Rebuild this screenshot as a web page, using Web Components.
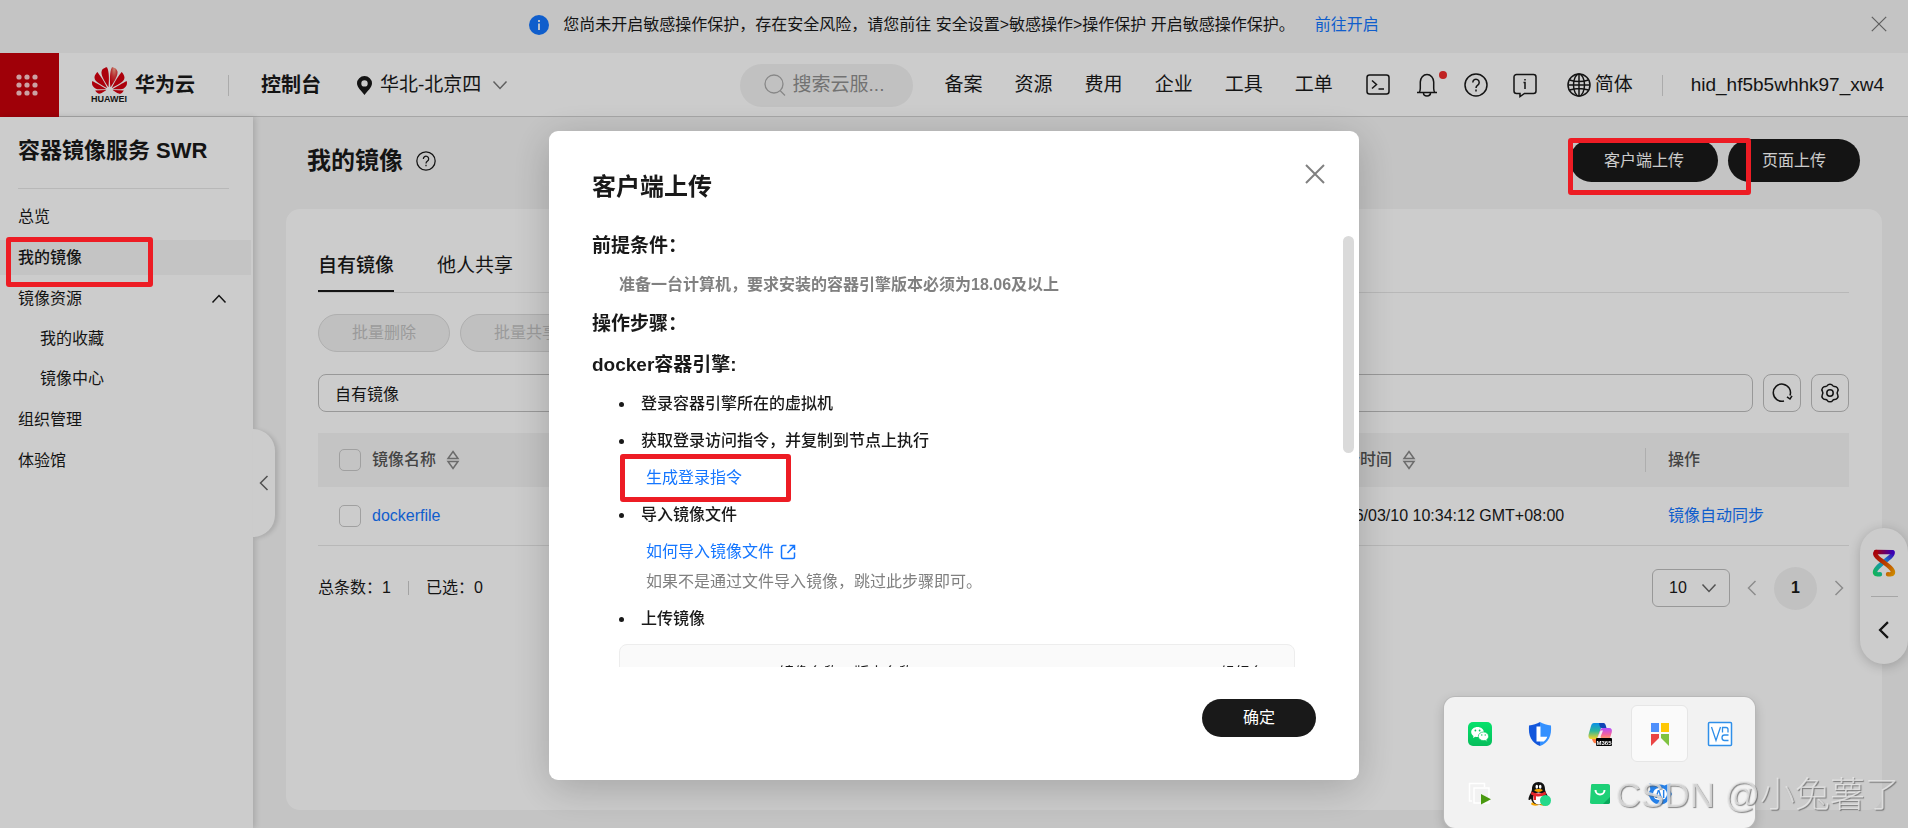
<!DOCTYPE html>
<html lang="zh-CN">
<head>
<meta charset="utf-8">
<meta name="viewport" content="width=device-width, initial-scale=1">
<title>容器镜像服务 SWR</title>
<style>
    html, body {
        margin: 0;
        height: 100%;
    }
    body {
        display: flex;
        flex-direction: column;
        overflow: hidden;
        font-family: "Liberation Sans", "Noto Sans CJK SC", sans-serif;
        font-size: 16px;
        line-height: 24px;
        color: #191919;
        background: #f5f5f5;
        --link: #1476ff;
        --line: #e6e6e6;
        --border: #bfbfbf;
        --muted: #808080;
        --dark: #191919;
    }
    .layout {
        flex: 1;
        min-height: 0;
        display: flex;
    }
    image-page {
        flex: 1;
    }
    .mark-nav {
        left: 6px;
        top: 237px;
        width: 147px;
        height: 50px;
    }
    .mark-upload {
        right: 157px;
        top: 138px;
        width: 183px;
        height: 57px;
    }
</style>
</head>
<body>
    <notice-bar></notice-bar>
    <app-header user="hid_hf5b5whhk97_xw4"></app-header>
    <div class="layout">
        <side-nav></side-nav>
        <image-page></image-page>
    </div>
    <float-helper></float-helper>
    <upload-dialog heading="客户端上传"></upload-dialog>
    <mark-box class="mark-nav"></mark-box>
    <mark-box class="mark-upload"></mark-box>
    <tray-panel></tray-panel>
    <water-mark>CSDN @小兔薯了</water-mark>

<script>
const RESET = `
    * {
        margin: 0;
        padding: 0;
        box-sizing: border-box;
    }
    button, input, select {
        font: inherit;
        color: inherit;
        border: 0;
        background: none;
        outline: 0;
    }
    button {
        cursor: pointer;
    }
    a {
        color: var(--link);
        text-decoration: none;
    }
    ul {
        list-style: none;
    }
`;

// viewBox and body of every icon, keyed by name
const ICONS = {
    close: ["0 0 20 20", `<path d="M1 1l18 18M19 1L1 19"/>`],
    apps: ["0 0 22 22", `<g fill="currentColor" stroke="none"><circle cx="3" cy="3" r="2.6"/><circle cx="11" cy="3" r="2.6"/><circle cx="19" cy="3" r="2.6"/><circle cx="3" cy="11" r="2.6"/><circle cx="11" cy="11" r="2.6"/><circle cx="19" cy="11" r="2.6"/><circle cx="3" cy="19" r="2.6"/><circle cx="11" cy="19" r="2.6"/><circle cx="19" cy="19" r="2.6"/></g>`],
    pin: ["0 0 15 19", `<path fill="currentColor" stroke="none" fill-rule="evenodd" d="M7.500 0A7.500 7.300 0 0 0 0 7.300C0 11.500 4.500 15 7.500 19 10.500 15 15 11.500 15 7.300A7.500 7.300 0 0 0 7.500 0zM7.500 4.200a3.200 3.200 0 1 1 0 6.400 3.200 3.200 0 0 1 0-6.400z"/>`],
    down: ["0 0 16 16", `<path d="M1.500 4.500L8 11.500l6.500-7"/>`],
    up: ["0 0 16 16", `<path d="M1.500 11.500L8 4.500l6.500 7"/>`],
    left: ["0 0 16 16", `<path d="M11.500 1L4.500 8l7 7"/>`],
    right: ["0 0 16 16", `<path d="M4.500 1l7 7-7 7"/>`],
    search: ["0 0 22 22", `<circle cx="10" cy="10" r="9"/><path d="M16 16.500l5 5"/>`],
    terminal: ["0 0 24 24", `<rect x="1" y="2" width="22" height="19" rx="2.500"/><path d="M6 7.500l4.500 4-4.500 4M12.500 16H18"/>`],
    bell: ["0 0 24 24", `<path d="M2 19.500h20M4 19.500c1-1 1.300-2 1.300-4V9a6.700 7.500 0 0 1 13.400 0v6.500c0 2 .3 3 1.300 4M8.500 20a3.500 3 0 0 0 7 0"/>`],
    help: ["0 0 24 24", `<circle cx="12" cy="12" r="11"/><path d="M8.800 9.500a3.200 3.200 0 1 1 5 2.600c-1.300.9-1.800 1.300-1.800 2.900M12 16.600v1.800"/>`],
    message: ["0 0 24 24", `<path d="M3.500 1.500h17a2.500 2.500 0 0 1 2.500 2.500v14a2.500 2.500 0 0 1-2.500 2.500H11.500L7 23.500v-3H3.500A2.500 2.500 0 0 1 1 18V4a2.500 2.500 0 0 1 2.500-2.500zM10.500 9.500H12V16M12 6v1.600"/>`],
    globe: ["0 0 24 24", `<circle cx="12" cy="12" r="11"/><ellipse cx="12" cy="12" rx="5.500" ry="11"/><path d="M12 1v22M2.500 7c5.500 1.800 13.500 1.800 19 0M2.500 17c5.500-1.800 13.500-1.800 19 0M1 12h22"/>`],
    refresh: ["0 0 20 20", `<path d="M12 18a8.600 8.600 0 1 1 6-5.500M15 13.800l3 2.200 2-3.200"/>`],
    gear: ["0 0 20 20", `<circle cx="10" cy="10" r="3.200"/><path d="M7.200 2.700a3.300 3.300 0 0 1 5.600 0 3.300 3.300 0 0 0 1.500.8 3.300 3.300 0 0 1 3.400 4.700 3.300 3.300 0 0 0 0 3.600 3.300 3.300 0 0 1-3.400 4.700 3.300 3.300 0 0 0-1.500.8 3.300 3.300 0 0 1-5.600 0 3.300 3.300 0 0 0-1.500-.8 3.300 3.300 0 0 1-3.400-4.700 3.300 3.300 0 0 0 0-3.600 3.300 3.300 0 0 1 3.400-4.700 3.300 3.300 0 0 0 1.500-.8z"/>`],
    sort: ["0 0 12 20", `<path d="M6 1.500L11 8.500H1zM6 18.500L11 11.500H1z"/>`],
    external: ["0 0 16 16", `<path d="M6.500 1.500H3A1.500 1.500 0 0 0 1.500 3v10A1.500 1.500 0 0 0 3 14.500h10a1.500 1.500 0 0 0 1.500-1.500V8.500M9.500 1.500h5V6M14.500 1.500L7.500 9"/>`],
    info: ["0 0 20 20", `<circle cx="10" cy="10" r="10" fill="#1476ff" stroke="none"/><path stroke="#fff" stroke-width="1.800" d="M10 8.500V15M10 5v2"/>`],
    huawei: ["0 2.900 24 18.200", `<defs><radialGradient id="p" cx=".55" cy=".1" r=".8"><stop offset="0" stop-color="#fba58c"/><stop offset=".5" stop-color="#e5393c"/><stop offset="1" stop-color="#d7000f"/></radialGradient></defs><g fill="#d7000f" stroke="none"><path d="M3.670 6.140S1.820 7.910 1.720 9.780v.35c.08 1.510 1.220 2.400 1.220 2.400 1.830 1.790 6.260 4.040 7.300 4.550 0 0 .06.03.1-.01l.02-.04v-.04C7.520 10.800 3.670 6.140 3.670 6.140zM9.650 18.600c-.02-.08-.1-.08-.1-.08l-7.380.26c.8 1.430 2.150 2.530 3.560 2.200.96-.25 3.160-1.780 3.880-2.300.06-.05.04-.09.04-.09zm.08-.78C6.490 15.630.21 12.280.21 12.280c-.15.46-.2.9-.21 1.300v.07c0 1.070.4 1.820.4 1.820.8 1.690 2.340 2.200 2.340 2.200.7.3 1.400.31 1.400.31.12.02 4.400 0 5.540 0 .05 0 .08-.05.08-.05v-.06c0-.03-.03-.05-.03-.05zM9.060 3.190a3.420 3.420 0 0 0-2.570 3.150v.41c.03.6.16 1.050.16 1.050.66 2.900 3.860 7.650 4.550 8.650.05.05.1.03.1.03a.1.1 0 0 0 .06-.1c1.060-10.600-1.110-13.420-1.110-13.420-.32.02-1.190.23-1.190.23z"/><path fill="url(#p)" d="M17.359 5.460s-.49-1.800-2.440-2.280c0 0-.57-.14-1.170-.22 0 0-2.180 2.810-1.120 13.430.01.07.06.08.06.08.07.03.1-.03.1-.03.72-1.030 3.900-5.760 4.550-8.640 0 0 .36-1.400.02-2.340z"/><path d="M14.439 18.530s-.07 0-.09.05c0 0-.01.07.03.1.7.51 2.850 2 3.880 2.300 0 0 .16.05.43.06h.14c.69-.02 1.900-.37 3-2.260zM22.269 10.120c.14-2.060-1.940-3.970-1.940-3.980 0 0-3.850 4.660-6.670 10.800 0 0-.03.08.02.13l.04.01h.06c1.060-.53 5.460-2.770 7.280-4.540 0 0 1.150-.93 1.210-2.420zM23.789 12.260s-6.280 3.370-9.520 5.550c0 0-.05.04-.03.11 0 0 .03.06.07.06 1.160 0 5.560 0 5.670-.02 0 0 .57-.02 1.270-.29 0 0 1.560-.5 2.370-2.270 0 0 .73-1.450.17-3.140z"/></g>`],
    ribbon: ["0 0 24 28", `<defs><linearGradient id="a" x1="0" y1="0" x2="1" y2="1"><stop offset="0" stop-color="#d0000f"/><stop offset=".5" stop-color="#e84a00"/><stop offset="1" stop-color="#ffa800"/></linearGradient><linearGradient id="b" x1="1" y1="0" x2="0" y2="1"><stop offset="0" stop-color="#4a00e0"/><stop offset=".45" stop-color="#1db4ff"/><stop offset="1" stop-color="#17e070"/></linearGradient><linearGradient id="c" x1="0" y1="0" x2="1" y2="0"><stop offset="0" stop-color="#d0000f"/><stop offset="1" stop-color="#4a00e0"/></linearGradient></defs><g stroke-width="4.400" stroke-linecap="round" stroke-linejoin="round"><path stroke="url(#b)" d="M20.500 3.500C22 8 2.500 17 3 23.500 3.200 25.500 6 25.500 8 25.300"/><path stroke="url(#c)" d="M4 3L20.500 3.100"/><path stroke="url(#a)" d="M4 3C-1 8 21.500 17 21 23.500c-.2 2-3 2-5 1.800"/></g>`],
    wechat: ["0 0 24 24", `<defs><linearGradient id="g" x1="0" y1="0" x2="0" y2="1"><stop offset="0" stop-color="#06e26c"/><stop offset="1" stop-color="#06bd5b"/></linearGradient></defs><g stroke="none"><rect width="24" height="24" rx="5" fill="url(#g)"/><path fill="#fff" d="M9.500 5C6 5 3.200 7.200 3.200 10c0 1.600.9 3 2.300 3.900L5 16l2.400-1.200c.7.2 1.400.3 2.100.3C13 15.100 15.800 12.800 15.800 10S13 5 9.500 5z"/><path fill="#fff" stroke="#09cc62" stroke-width=".7" d="M15.500 10c-2.900 0-5.200 1.900-5.200 4.300s2.300 4.300 5.200 4.300c.6 0 1.200-.1 1.700-.2l2 1-.5-1.800c1.200-.8 1.900-1.900 1.900-3.300 0-2.400-2.200-4.300-5.100-4.300z"/><g fill="#08c860"><circle cx="7.400" cy="8.500" r=".9"/><circle cx="11.600" cy="8.500" r=".9"/><circle cx="13.800" cy="13" r=".7"/><circle cx="17.200" cy="13" r=".7"/></g></g>`],
    shield: ["0 0 24 24", `<g stroke="none"><path fill="#1357dc" d="M12 0C9 2 5 3 1 3.500c-.3 5 0 9 2 13C5 20 8 22.500 12 24z"/><path fill="#3491ff" d="M12 0c3 2 7 3 11 3.500.3 5 0 9-2 13-2 3.500-5 6-9 7.500z"/><path fill="#fff" d="M8.500 4.500h4v10.300h6.800c-.8 2-2 3.500-3.500 4.700H8.500z"/></g>`],
    copilot: ["0 0 24 24", `<defs><linearGradient id="l" x1="0" y1="0" x2="0" y2="1"><stop offset="0" stop-color="#0a8fe8"/><stop offset=".5" stop-color="#2cb69b"/><stop offset="1" stop-color="#f9d423"/></linearGradient><linearGradient id="r" x1="0" y1="0" x2="0" y2="1"><stop offset="0" stop-color="#b44cff"/><stop offset=".6" stop-color="#f4649a"/><stop offset="1" stop-color="#ffa060"/></linearGradient></defs><g stroke="none"><path fill="url(#l)" d="M6 1h9L9 17H3c-2 0-3-2-2.400-4.500L3 4c.5-2 1.500-3 3-3z"/><path fill="#1145b5" d="M11 1h4c2 0 2.500 1 3.500 5H14c-1.500 0-2.500-1-3-5z"/><path fill="url(#r)" d="M15 6h6c2.500 0 3.500 2 2.700 4.500L22 16H13l-1-2-2 3H9l3-8.500C12.500 7 13.500 6 15 6z"/><path fill="#f2f2f2" d="M12.500 8.500L9 17l3-1 3-7.500z"/><path fill="#ff7a45" d="M4 17h5l-1 4c-2 1-3-1-4-4z"/><rect x="8" y="16" width="16" height="8" rx="1" fill="#000"/></g><text x="16" y="22.500" text-anchor="middle" font-size="6" font-weight="700" fill="#fff" stroke="none">M365</text>`],
    blocks: ["0 0 24 24", `<g stroke="none"><path fill="#4f8ffb" d="M3 1h8v9H3z"/><path fill="#fec706" d="M13 1h8v9h-8z"/><path fill="#ea4444" d="M3 12h8v4l-8 8z"/><path fill="#7fc241" d="M13 12h8v12l-8-8z"/></g>`],
    vnc: ["0 0 24 24", `<g fill="none" stroke="#2f8fe9"><rect x=".5" y=".5" width="23" height="23" rx="1" fill="#fff"/><path stroke-width="1.300" d="M3.500 5L8 18.500 12.500 5M14.500 10.500V5.500h3.500c1.500 0 2 .5 2 2v3M20.500 13h-4c-1.500 0-2.500 1-2.500 2.800s1 2.700 2.500 2.700h4"/></g>`],
    frames: ["0 0 24 24", `<path fill="none" stroke="#fff" stroke-width="1.500" d="M4 19H1.500V1.500h15V5M6 6h15v15H6z"/><path fill="#4a9a10" stroke="none" d="M13 12l10 5.200-10 5.200z"/>`],
    penguin: ["0 0 24 24", `<g stroke="none"><path fill="#f7a600" d="M3 22c1-3 7-2 8 0s-7 2.500-8 0zM11 22c1-3 7-2 8 0s-7 2.500-8 0z"/><path fill="#111" d="M10.500 0C6 0 4 3 4 7c0 3-3 6-3.500 10 0 2 1.500 1 2.500-.5.5 3 3 6 7.500 6s7-3 7.500-6c1 1.500 2.500 2 2.500.5C20 13 17 10 17 7c0-4-2-7-6.500-7z"/><ellipse cx="10.500" cy="16.500" rx="5.500" ry="6" fill="#fff"/><path fill="#e5252b" d="M3.500 9.500c4 2.500 10 2.500 14 0l.5 3c-3 1.800-7 2.200-10 1.700V18H5.500v-4.500L3 12.500z"/><path fill="#f7a600" d="M6 8c2-1.500 7-1.500 9 0-2 2.500-7 2.500-9 0z"/><ellipse cx="8.800" cy="4.800" rx="1.300" ry="2" fill="#fff"/><ellipse cx="12.200" cy="4.800" rx="1.300" ry="2" fill="#fff"/><circle cx="9" cy="5" r=".6"/><circle cx="12" cy="5" r=".6"/><circle cx="17.500" cy="18.500" r="5.500" fill="#24d98a"/></g>`],
    bag: ["0 0 24 24", `<g stroke="none"><path fill="#1dd077" d="M4 2h16c1.200 0 2 .8 2 2v16c0 1.200-.8 2-2 2H4c-1.500 0-2.200-.8-2-2L3 4c0-1.200.3-2 1-2z"/><path fill="#0aa85c" d="M22 15v5c0 1.200-.8 2-2 2h-5z"/></g><path stroke="#fff" stroke-width="2" d="M7.500 8c0 6 9 6 9 0"/>`],
    bot: ["0 0 24 24", `<g stroke="none"><path fill="#2580e8" d="M1.500 1l6 2.500c3-1.300 6-1.300 9 0l6-2.500-.8 6.500L24 12l-3 6c-5 6-13 6-18 0L0 12l2.300-4.500z"/><rect x="5" y="6" width="14" height="12" rx="6" fill="#fff"/></g><text x="12" y="16" text-anchor="middle" font-size="10" font-weight="700" fill="#2580e8" stroke="none">AI</text>`]
};

class UiElement extends HTMLElement {
    connectedCallback() {
        if (!this.shadowRoot) {
            this.attachShadow({ mode: "open" });
        }
        this.shadowRoot.innerHTML = `<style>${RESET}${this.styles()}</style>${this.render()}`;
    }

    styles() {
        return "";
    }
}

class UiIcon extends UiElement {
    styles() {
        return `
            :host {
                display: block;
                flex: none;
                width: 16px;
                height: 16px;
            }
            svg {
                display: block;
                width: 100%;
                height: 100%;
                overflow: visible;
                stroke: currentColor;
                stroke-width: var(--stroke, 1.5);
                fill: none;
            }
        `;
    }

    render() {
        const [box, body] = ICONS[this.getAttribute("name")];
        return `<svg viewBox="${box}" aria-hidden="true">${body}</svg>`;
    }
}

class PillButton extends UiElement {
    styles() {
        return `
            :host {
                display: block;
                --pad: 34px;
                --height: 43px;
            }
            button {
                display: block;
                height: var(--height);
                padding: 0 var(--pad);
                border-radius: 22px;
                color: #fff;
                background: var(--dark);
                white-space: nowrap;
            }
            button:disabled {
                color: #c2c2c2;
                background: #f0f0f0;
                border: 1px solid #dbdbdb;
                cursor: default;
            }
        `;
    }

    render() {
        return `<button type="button" ${this.hasAttribute("disabled") ? "disabled" : ""}><slot></slot></button>`;
    }
}

class MarkBox extends UiElement {
    styles() {
        return `
            :host {
                position: absolute;
                z-index: 20;
                box-sizing: border-box;
                border: 5px solid #ed1c24;
                border-radius: 3px;
                pointer-events: none;
            }
        `;
    }

    render() {
        return "";
    }
}

class NoticeBar extends UiElement {
    styles() {
        return `
            :host {
                flex: none;
                display: flex;
                align-items: center;
                height: 53px;
                padding: 0 21px;
                box-sizing: border-box;
            }
            .message {
                flex: 1;
                display: flex;
                align-items: center;
                justify-content: center;
                padding: 0 0 4px 16px;
            }
            .info {
                width: 20px;
                height: 20px;
                margin-right: 14px;
            }
            a {
                margin-left: 20px;
            }
            button {
                margin-bottom: 6px;
                color: #777;
            }
        `;
    }

    render() {
        return `
            <div class="message">
                <ui-icon class="info" name="info"></ui-icon>
                <span>您尚未开启敏感操作保护，存在安全风险，请您前往 安全设置&gt;敏感操作&gt;操作保护 开启敏感操作保护。</span>
                <a href="#">前往开启</a>
            </div>
            <button type="button" aria-label="关闭"><ui-icon name="close"></ui-icon></button>
        `;
    }
}

class AppHeader extends UiElement {
    styles() {
        return `
            :host {
                flex: none;
                display: flex;
                align-items: center;
                height: 64px;
                box-sizing: border-box;
                padding-right: 24px;
                font-size: 19px;
                background: #fff;
                box-shadow: inset 0 -1px #d0d0d0;
            }
            .apps {
                display: grid;
                place-items: center;
                width: 59px;
                height: 64px;
                padding-right: 5px;
                color: #ffc8cb;
                background: #c7000b;
            }
            .apps ui-icon {
                width: 22px;
                height: 22px;
            }
            .brand {
                margin-left: 32px;
                text-align: center;
                font-size: 9px;
                font-weight: 700;
                line-height: 9px;
                color: var(--dark);
            }
            .brand ui-icon {
                width: 35px;
                height: 27px;
                margin: 0 auto 1px;
            }
            strong {
                font-size: 20px;
            }
            .cloud {
                margin-left: 8px;
            }
            .rule {
                width: 1px;
                height: 21px;
                background: #d6d6d6;
            }
            .rule.first {
                margin: 0 32px 0 33px;
            }
            .region {
                display: flex;
                align-items: center;
                margin-left: 36px;
            }
            .region .pin {
                width: 15px;
                height: 19px;
                margin-right: 8px;
            }
            .region .arrow {
                margin-left: 11px;
                color: #777;
            }
            .search {
                display: flex;
                align-items: center;
                gap: 7px;
                width: 173px;
                height: 43px;
                margin-left: auto;
                padding: 0 24px;
                box-sizing: border-box;
                border-radius: 22px;
                background: #f2f2f2;
                color: #aaa;
            }
            .search ui-icon {
                width: 22px;
                height: 22px;
                --stroke: 1.3;
            }
            .search input {
                flex: 1;
                min-width: 0;
            }
            .search input::placeholder {
                color: #8f8f8f;
            }
            nav {
                display: flex;
                gap: 32px;
                margin: 0 33px 0 32px;
            }
            nav a {
                color: inherit;
            }
            .tools {
                display: flex;
                align-items: center;
                gap: 25px;
            }
            .tools button {
                position: relative;
            }
            .tools ui-icon {
                width: 24px;
                height: 24px;
            }
            .dot {
                position: absolute;
                top: -2px;
                right: -8px;
                width: 8px;
                height: 8px;
                border-radius: 50%;
                background: #f02c2c;
            }
            .lang {
                display: flex;
                align-items: center;
                gap: 4px;
                margin: 0 29px 0 30px;
            }
            .lang ui-icon {
                width: 24px;
                height: 24px;
            }
            .user {
                margin-left: 28px;
            }
        `;
    }

    render() {
        const links = ["备案", "资源", "费用", "企业", "工具", "工单"];
        return `
            <button class="apps" type="button" aria-label="服务列表"><ui-icon name="apps"></ui-icon></button>
            <div class="brand"><ui-icon name="huawei"></ui-icon>HUAWEI</div>
            <strong class="cloud">华为云</strong>
            <span class="rule first"></span>
            <strong>控制台</strong>
            <button class="region" type="button">
                <ui-icon class="pin" name="pin"></ui-icon>华北-北京四<ui-icon class="arrow" name="down"></ui-icon>
            </button>
            <label class="search">
                <ui-icon name="search"></ui-icon>
                <input type="text" placeholder="搜索云服..." aria-label="搜索">
            </label>
            <nav>${links.map((text) => `<a href="#">${text}</a>`).join("")}</nav>
            <div class="tools">
                <button type="button" aria-label="CloudShell"><ui-icon name="terminal"></ui-icon></button>
                <button type="button" aria-label="消息"><ui-icon name="bell"></ui-icon><i class="dot"></i></button>
                <button type="button" aria-label="帮助"><ui-icon name="help"></ui-icon></button>
                <button type="button" aria-label="反馈"><ui-icon name="message"></ui-icon></button>
            </div>
            <button class="lang" type="button"><ui-icon name="globe"></ui-icon>简体</button>
            <span class="rule"></span>
            <span class="user">${this.getAttribute("user")}</span>
        `;
    }
}

class SideNav extends UiElement {
    styles() {
        return `
            :host {
                position: relative;
                z-index: 1;
                flex: none;
                width: 253px;
                box-sizing: border-box;
                background: #fff;
                box-shadow: 2px 0 6px rgba(0, 0, 0, 0.15);
            }
            h1 {
                margin: 0 24px 0 18px;
                padding: 18px 0 22px;
                border-bottom: 1px solid var(--line);
                font-size: 22px;
                line-height: 31px;
            }
            ul {
                display: flex;
                flex-direction: column;
                gap: 6px;
            }
            .menu {
                padding: 10px 2px 0 0;
            }
            .menu a {
                display: flex;
                align-items: center;
                justify-content: space-between;
                height: 35px;
                padding: 0 24px 0 18px;
                color: inherit;
            }
            .menu a.active {
                font-weight: 500;
                background: #f5f5f5;
            }
            .sub {
                gap: 5px;
                padding-top: 5px;
            }
            .sub a {
                padding-left: 40px;
            }
            .fold {
                position: absolute;
                left: 100%;
                top: 312px;
                display: grid;
                place-items: center;
                width: 22px;
                height: 108px;
                border-radius: 0 22px 22px 0;
                color: #666;
                background: #fff;
                box-shadow: 3px 1px 4px rgba(0, 0, 0, 0.12);
            }
        `;
    }

    render() {
        return `
            <h1>容器镜像服务 SWR</h1>
            <ul class="menu">
                <li><a href="#">总览</a></li>
                <li><a href="#" class="active">我的镜像</a></li>
                <li>
                    <a href="#">镜像资源<ui-icon name="up"></ui-icon></a>
                    <ul class="sub">
                        <li><a href="#">我的收藏</a></li>
                        <li><a href="#">镜像中心</a></li>
                    </ul>
                </li>
                <li><a href="#">组织管理</a></li>
                <li><a href="#">体验馆</a></li>
            </ul>
            <button class="fold" type="button" aria-label="收起"><ui-icon name="left"></ui-icon></button>
        `;
    }
}

class ImagePage extends UiElement {
    styles() {
        return `
            :host {
                display: flex;
                flex-direction: column;
                min-width: 0;
                padding: 0 26px 18px 33px;
                box-sizing: border-box;
            }
            header {
                display: flex;
                align-items: center;
                gap: 10px;
                padding: 22px 22px 27px 21px;
            }
            h2 {
                font-size: 24px;
                line-height: 36px;
            }
            header ui-icon {
                width: 20px;
                height: 20px;
                margin: 0 auto 0 3px;
            }
            section {
                flex: 1;
                padding: 0 33px 0 32px;
                border-radius: 14px;
                background: #fff;
            }
            image-table, page-footer {
                margin-top: 21px;
            }
        `;
    }

    render() {
        return `
            <header>
                <h2>我的镜像</h2>
                <ui-icon name="help"></ui-icon>
                <pill-button>客户端上传</pill-button>
                <pill-button>页面上传</pill-button>
            </header>
            <section>
                <image-toolbar></image-toolbar>
                <image-table></image-table>
                <page-footer total="1" selected="0"></page-footer>
            </section>
        `;
    }
}

class ImageToolbar extends UiElement {
    styles() {
        return `
            :host {
                display: block;
            }
            .tabs {
                display: flex;
                gap: 43px;
                padding-top: 42px;
                border-bottom: 1px solid var(--line);
                font-size: 19px;
                line-height: 30px;
            }
            .tabs button {
                padding-bottom: 9px;
                border-bottom: 2px solid transparent;
            }
            .tabs .active {
                font-weight: 500;
                border-color: var(--dark);
            }
            .actions {
                display: flex;
                gap: 10px;
                padding: 21px 0 22px;
            }
            .actions pill-button {
                --height: 38px;
                --pad: 33px;
            }
            .filter {
                display: flex;
                gap: 10px;
            }
            .filter input {
                flex: 1;
                min-width: 0;
                height: 38px;
                padding: 0 16px;
                border: 1px solid var(--border);
                border-radius: 8px;
            }
            .filter button {
                display: grid;
                place-items: center;
                width: 38px;
                height: 38px;
                border: 1px solid var(--border);
                border-radius: 8px;
            }
            .filter ui-icon {
                width: 20px;
                height: 20px;
            }
        `;
    }

    render() {
        return `
            <div class="tabs">
                <button type="button" class="active">自有镜像</button>
                <button type="button">他人共享</button>
            </div>
            <div class="actions">
                <pill-button disabled>批量删除</pill-button>
                <pill-button disabled>批量共享</pill-button>
            </div>
            <div class="filter">
                <input type="text" value="自有镜像" aria-label="筛选条件">
                <button type="button" aria-label="刷新"><ui-icon name="refresh"></ui-icon></button>
                <button type="button" aria-label="设置"><ui-icon name="gear"></ui-icon></button>
            </div>
        `;
    }
}

class ImageTable extends UiElement {
    styles() {
        return `
            :host {
                display: block;
            }
            table {
                width: 100%;
                border-collapse: collapse;
                table-layout: fixed;
                text-align: left;
            }
            th {
                height: 54px;
                font-weight: 500;
                color: #555;
                background: #f5f5f5;
            }
            td {
                height: 58px;
                border-bottom: 1px solid var(--line);
            }
            .time {
                width: 338px;
            }
            .action {
                width: 204px;
            }
            .cell {
                display: flex;
                align-items: center;
                gap: 11px;
                padding-left: 21px;
            }
            .action .cell {
                padding-left: 0;
            }
            .action .cell::before {
                content: "";
                width: 1px;
                height: 24px;
                margin-right: 11px;
                background: #dadada;
            }
            td.action .cell::before {
                background: none;
            }
            input {
                appearance: none;
                width: 22px;
                height: 22px;
                border: 1px solid #c8c8c8;
                border-radius: 5px;
            }
            ui-icon {
                width: 12px;
                height: 20px;
                color: #888;
            }
        `;
    }

    render() {
        return `
            <table>
                <thead>
                    <tr>
                        <th><div class="cell"><input type="checkbox" aria-label="全选">镜像名称<ui-icon name="sort"></ui-icon></div></th>
                        <th class="time"><div class="cell">更新时间<ui-icon name="sort"></ui-icon></div></th>
                        <th class="action"><div class="cell">操作</div></th>
                    </tr>
                </thead>
                <tbody>
                    <tr>
                        <td><div class="cell"><input type="checkbox" aria-label="dockerfile"><a href="#">dockerfile</a></div></td>
                        <td class="time"><div class="cell">2026/03/10 10:34:12 GMT+08:00</div></td>
                        <td class="action"><div class="cell"><a href="#">镜像自动同步</a></div></td>
                    </tr>
                </tbody>
            </table>
        `;
    }
}

class PageFooter extends UiElement {
    styles() {
        return `
            :host {
                display: flex;
                align-items: center;
                height: 43px;
            }
            .rule {
                width: 1px;
                height: 14px;
                margin: 0 17px;
                background: #ccc;
            }
            .size {
                display: grid;
                align-items: center;
                margin-left: auto;
                color: #666;
            }
            .size > * {
                grid-area: 1 / 1;
            }
            select {
                appearance: none;
                width: 78px;
                height: 38px;
                padding: 0 16px;
                border: 1px solid var(--border);
                border-radius: 6px;
                color: var(--dark);
            }
            .size ui-icon {
                justify-self: end;
                margin-right: 13px;
                pointer-events: none;
            }
            .arrow {
                margin: 0 2px 0 14px;
                color: #b0b0b0;
            }
            .page {
                width: 43px;
                height: 43px;
                margin-left: 12px;
                border-radius: 50%;
                font-weight: 700;
                background: #f2f2f2;
            }
        `;
    }

    render() {
        return `
            <span>总条数：${this.getAttribute("total")}</span>
            <i class="rule"></i>
            <span>已选：${this.getAttribute("selected")}</span>
            <label class="size">
                <select aria-label="每页条数"><option>10</option><option>20</option></select>
                <ui-icon name="down"></ui-icon>
            </label>
            <button class="arrow" type="button" aria-label="上一页"><ui-icon name="left"></ui-icon></button>
            <button class="page" type="button">1</button>
            <button class="arrow" type="button" aria-label="下一页"><ui-icon name="right"></ui-icon></button>
        `;
    }
}

class FloatHelper extends UiElement {
    styles() {
        return `
            :host {
                position: absolute;
                right: 0;
                top: 528px;
                display: flex;
                flex-direction: column;
                align-items: center;
                width: 48px;
                height: 136px;
                padding-top: 21px;
                box-sizing: border-box;
                border-radius: 24px;
                background: #fff;
                box-shadow: 0 2px 12px rgba(0, 0, 0, 0.2);
            }
            .ribbon {
                width: 24px;
                height: 28px;
            }
            .rule {
                width: 27px;
                height: 1px;
                margin: 19px 0 24px;
                background: #d0d0d0;
            }
            .open {
                width: 20px;
                height: 18px;
                --stroke: 2;
            }
        `;
    }

    render() {
        return `
            <button type="button" aria-label="助手"><ui-icon class="ribbon" name="ribbon"></ui-icon></button>
            <i class="rule"></i>
            <button type="button" aria-label="展开"><ui-icon class="open" name="left"></ui-icon></button>
        `;
    }
}

class UploadDialog extends UiElement {
    styles() {
        return `
            :host {
                position: fixed;
                inset: 0;
                z-index: 10;
                display: flex;
                justify-content: center;
                align-items: flex-start;
                padding: 131px 0 48px;
                box-sizing: border-box;
                background: rgba(0, 0, 0, 0.2);
            }
            .dialog {
                display: flex;
                flex-direction: column;
                width: 810px;
                max-width: 100%;
                height: 100%;
                border-radius: 9px;
                background: #fff;
                box-shadow: 0 8px 40px rgba(0, 0, 0, 0.2);
            }
            header {
                display: flex;
                justify-content: space-between;
                align-items: flex-start;
                padding: 33px 34px 30px 43px;
            }
            h2 {
                padding-top: 8px;
                font-size: 24px;
                line-height: 30px;
            }
            header ui-icon {
                width: 20px;
                height: 20px;
                color: var(--muted);
                --stroke: 2;
            }
            .body {
                flex: 1;
                min-height: 0;
                display: flex;
            }
            .content {
                flex: 1;
                display: flex;
                flex-direction: column;
                gap: 13px;
                overflow: hidden;
                margin-right: 48px;
                padding-left: 43px;
            }
            h3 {
                font-size: 19px;
                line-height: 28px;
            }
            .need {
                padding-left: 27px;
                font-weight: 600;
                color: var(--muted);
            }
            ul {
                display: flex;
                flex-direction: column;
                gap: 13px;
                padding-left: 27px;
            }
            li {
                position: relative;
                display: flex;
                flex-direction: column;
                gap: 13px;
                padding-left: 22px;
                font-weight: 500;
            }
            li::before {
                content: "";
                position: absolute;
                left: 0;
                top: 10px;
                width: 5px;
                height: 5px;
                border-radius: 50%;
                background: var(--dark);
            }
            .detail {
                display: flex;
                flex-direction: column;
                align-items: flex-start;
                gap: 6px;
                padding-left: 5px;
                font-weight: 400;
                color: var(--muted);
            }
            .detail a {
                display: flex;
                align-items: center;
                gap: 6px;
            }
            mark-box {
                left: 1px;
                top: 25px;
                width: 171px;
                height: 48px;
            }
            pre {
                flex: none;
                margin-left: 27px;
                padding: 18px 15px;
                border: 1px solid #ededed;
                border-radius: 8px;
                font: 15px/24px "Liberation Mono", "Noto Sans CJK SC", monospace;
                white-space: pre-wrap;
                word-break: break-all;
                background: #fafafa;
            }
            .thumb {
                width: 11px;
                height: 217px;
                margin: 4px 5px 0 0;
                border-radius: 6px;
                background: #dadada;
            }
            footer {
                display: flex;
                justify-content: flex-end;
                padding: 32px 43px 43px;
            }
            footer pill-button {
                --height: 38px;
                --pad: 41px;
            }
        `;
    }

    render() {
        return `
            <div class="dialog" role="dialog" aria-labelledby="title">
                <header>
                    <h2 id="title">${this.getAttribute("heading")}</h2>
                    <button type="button" aria-label="关闭"><ui-icon name="close"></ui-icon></button>
                </header>
                <div class="body">
                    <div class="content">
                        <h3>前提条件：</h3>
                        <p class="need">准备一台计算机，要求安装的容器引擎版本必须为18.06及以上</p>
                        <h3>操作步骤：</h3>
                        <h3>docker容器引擎:</h3>
                        <ul>
                            <li>登录容器引擎所在的虚拟机</li>
                            <li>获取登录访问指令，并复制到节点上执行
                                <div class="detail"><a href="#">生成登录指令</a></div>
                                <mark-box></mark-box>
                            </li>
                            <li>导入镜像文件
                                <div class="detail">
                                    <a href="#">如何导入镜像文件<ui-icon name="external"></ui-icon></a>
                                    <p>如果不是通过文件导入镜像，跳过此步骤即可。</p>
                                </div>
                            </li>
                            <li>上传镜像</li>
                        </ul>
                        <pre>sudo docker tag 镜像名称：版本名称 swr.cn-north-4.myhuaweicloud.com/组织名称/镜像名称：版本名称</pre>
                    </div>
                    <div class="thumb"></div>
                </div>
                <footer><pill-button>确定</pill-button></footer>
            </div>
        `;
    }
}

class TrayPanel extends UiElement {
    styles() {
        return `
            :host {
                position: absolute;
                right: 153px;
                bottom: 0;
                z-index: 30;
                display: grid;
                grid-template-columns: repeat(5, 57px);
                gap: 3px;
                padding: 8px 7px 6px;
                border-radius: 11px;
                background: #f2f2f2;
                box-shadow: 0 0 0 1px #b8b8b8, 0 4px 12px rgba(0, 0, 0, 0.2);
            }
            button {
                display: grid;
                place-items: center;
                width: 57px;
                height: 57px;
                border: 1px solid transparent;
                border-radius: 6px;
            }
            .hover {
                border-color: #e6e6e6;
                background: #fafafa;
            }
            ui-icon {
                width: 24px;
                height: 24px;
            }
        `;
    }

    render() {
        const apps = ["wechat", "shield", "copilot", "blocks", "vnc", "frames", "penguin", "bag", "bot"];
        return apps.map((name) => `
            <button type="button" class="${name === "blocks" ? "hover" : ""}" aria-label="${name}"><ui-icon name="${name}"></ui-icon></button>
        `).join("");
    }
}

class WaterMark extends UiElement {
    styles() {
        return `
            :host {
                position: absolute;
                right: 8px;
                bottom: 8px;
                z-index: 40;
                font: 300 35px/50px "Liberation Sans", "Noto Sans CJK SC", sans-serif;
                color: rgba(235, 235, 235, 0.75);
                text-shadow: 1px 1px 1px rgba(90, 90, 90, 0.7);
                white-space: nowrap;
                pointer-events: none;
            }
        `;
    }

    render() {
        return `<slot></slot>`;
    }
}

customElements.define("ui-icon", UiIcon);
customElements.define("pill-button", PillButton);
customElements.define("mark-box", MarkBox);
customElements.define("notice-bar", NoticeBar);
customElements.define("app-header", AppHeader);
customElements.define("side-nav", SideNav);
customElements.define("image-toolbar", ImageToolbar);
customElements.define("image-table", ImageTable);
customElements.define("page-footer", PageFooter);
customElements.define("image-page", ImagePage);
customElements.define("float-helper", FloatHelper);
customElements.define("upload-dialog", UploadDialog);
customElements.define("tray-panel", TrayPanel);
customElements.define("water-mark", WaterMark);
</script>
</body>
</html>
